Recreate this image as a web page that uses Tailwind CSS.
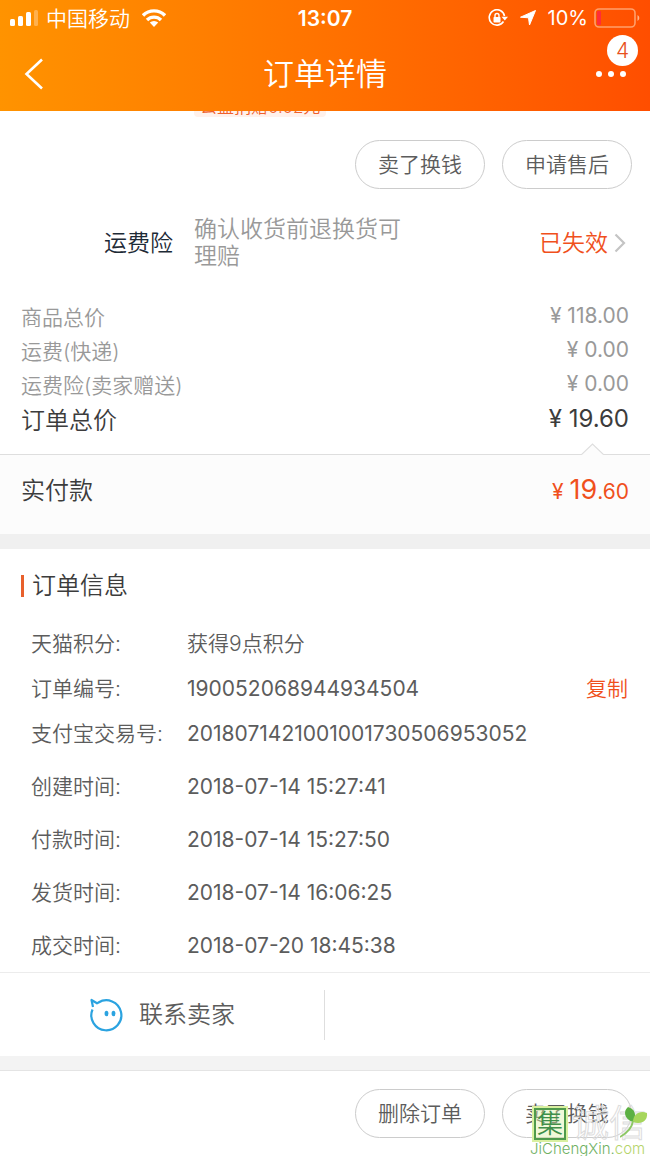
<!DOCTYPE html>
<html lang="zh-CN">
<head>
    <meta charset="UTF-8">
    <meta name="viewport" content="width=device-width, initial-scale=1.0">
    <title>订单详情</title>
    <script src="https://cdn.jsdelivr.net/npm/@tailwindcss/browser@4"></script>
</head>
<body class="bg-white min-h-screen font-['Inter','Noto_Sans_CJK_SC',sans-serif] font-[350] text-[#5c5c5c] text-[21px] leading-[34px]">

    <!-- Header -->
    <header class="relative z-10 bg-linear-to-r from-[#ff9300] via-[#ff7200] to-[#ff4e00] text-white">
        <div class="grid grid-cols-3 items-center h-9 pl-2.5 pr-2.5 text-[20px] leading-none">
            <div class="flex items-center gap-2">
                <svg class="w-7 h-4 shrink-0" viewBox="0 0 28 16" fill="currentColor">
                    <rect x="0" y="9" width="5" height="7" rx="1.5"/>
                    <rect x="8" y="6" width="5" height="10" rx="1.5"/>
                    <rect x="16" y="2" width="5" height="14" rx="1.5"/>
                    <rect x="24" y="0" width="4" height="16" rx="1.5" opacity="0.3"/>
                </svg>
                <span class="whitespace-nowrap text-[21px]">中国移动</span>
                <svg class="w-6 h-[18px] shrink-0 ml-1" viewBox="0 0 24 18" fill="none" stroke="currentColor" stroke-width="3.4">
                    <path d="M1 6.5a15.5 15.5 0 0 1 22 0"/>
                    <path d="M5 11a10 10 0 0 1 14 0"/>
                    <path d="M12 18l-4.2-4.4a6 6 0 0 1 8.4 0z" fill="currentColor" stroke="none"/>
                </svg>
            </div>
            <span class="text-center text-[21px] font-semibold">13:07</span>
            <div class="flex items-center justify-end gap-1.5">
                <svg class="w-5 h-[18px] shrink-0" viewBox="0 0 20 18" fill="none" stroke="currentColor" stroke-width="1.6">
                    <path d="M15.5 12.5A7.7 7.7 0 1 1 16.5 7"/>
                    <path d="M13.5 7.8H20l-3.2 3.8z" fill="currentColor" stroke="none"/>
                    <rect x="5.5" y="8" width="7" height="5.5" rx="0.8" fill="currentColor" stroke="none"/>
                    <path d="M7 8.5V6.5a2 2 0 0 1 4 0v2" stroke-width="1.4"/>
                </svg>
                <svg class="w-4 h-4 shrink-0 mx-1.5" viewBox="0 0 16 16" fill="currentColor" stroke="currentColor" stroke-linejoin="round">
                    <path d="M15.5 0.5L9.5 15L8.5 7.8L0.5 7.2z"/>
                </svg>
                <span class="font-normal">10%</span>
                <svg class="w-[46px] h-5 shrink-0" viewBox="0 0 46 20" fill="none">
                    <rect x="1" y="1" width="40" height="18" rx="4" stroke="#ffa06b" stroke-width="1.6"/>
                    <rect x="3" y="3" width="4" height="14" rx="1" fill="#ff2d38"/>
                    <path d="M43.5 7v6a3.4 3.4 0 0 0 0-6z" fill="#ffb68c"/>
                </svg>
            </div>
        </div>
        <div class="flex items-center justify-between h-[75px] px-6">
            <button type="button" aria-label="返回" class="w-9">
                <svg class="w-5 h-8" viewBox="0 0 20 32" fill="none" stroke="currentColor" stroke-width="2.6">
                    <path d="M18 1.5L2.5 16l15.5 14.5"/>
                </svg>
            </button>
            <h1 class="text-[31px]">订单详情</h1>
            <button type="button" aria-label="更多" class="relative w-9 flex justify-end">
                <svg class="w-[30px] h-1.5" viewBox="0 0 30 6" fill="currentColor">
                    <circle cx="3" cy="3" r="3"/>
                    <circle cx="15" cy="3" r="3"/>
                    <circle cx="27" cy="3" r="3"/>
                </svg>
                <span class="absolute -right-3 -top-9 size-[31px] rounded-full bg-white text-[#e8501c] leading-[31px] text-center">4</span>
            </button>
        </div>
    </header>

    <main>
        <!-- Tag of the item row, scrolled under the header -->
        <div class="h-[29px] pl-[194px]">
            <span class="relative -top-[22px] inline-block h-5 px-1.5 rounded-sm bg-[#fff1eb] text-[#f0602c] text-[17px] leading-5">公益捐赠0.02元</span>
        </div>

        <div class="flex justify-end gap-[17px] pr-[18px]">
            <button type="button" class="w-[130px] h-[49px] rounded-full border border-[#ccc]">卖了换钱</button>
            <button type="button" class="w-[130px] h-[49px] rounded-full border border-[#ccc]">申请售后</button>
        </div>

        <a href="#" class="flex items-center mt-[27px] pl-[104px] pr-6 text-[23px] leading-[27px]">
            <span class="w-[90px] shrink-0 text-[#1d2a36]">运费险</span>
            <span class="w-[212px] text-[#999]">确认收货前退换货可理赔</span>
            <span class="ml-auto text-[#f0501c]">已失效</span>
            <svg class="w-3 h-5 ml-1.5" viewBox="0 0 12 20" fill="none" stroke="#c4c4c4" stroke-width="2.2">
                <path d="M1.5 1.5L10 10l-8.5 8.5"/>
            </svg>
        </a>

        <!-- Price summary -->
        <dl class="mt-[29px] px-[21px] text-[#999]">
            <div class="flex justify-between h-[34px]"><dt class="pt-0.5">商品总价</dt><dd class="font-normal">¥ 118.00</dd></div>
            <div class="flex justify-between h-[34px]"><dt class="pt-0.5">运费(快递)</dt><dd class="font-normal">¥ 0.00</dd></div>
            <div class="flex justify-between h-[34px]"><dt class="pt-0.5">运费险(卖家赠送)</dt><dd class="font-normal">¥ 0.00</dd></div>
            <div class="flex justify-between h-[53px] text-[24px] leading-9 text-[#3c3c3c]"><dt class="pt-0.5">订单总价</dt><dd class="font-normal">¥ 19.60</dd></div>
        </dl>

        <div class="relative flex items-center justify-between h-20 pb-2 px-[21px] border-t border-[#dedede] bg-[#fcfcfc]">
            <svg class="absolute right-[46px] -top-3 w-[23px] h-3" viewBox="0 0 23 12" fill="#fcfcfc" stroke="#dedede" stroke-width="1.2">
                <path d="M0 12L11.5 1L23 12"/>
            </svg>
            <span class="text-[24px] text-[#3c3c3c]">实付款</span>
            <span class="font-normal text-[#f0501c]">¥ <span class="text-[27px]">19</span>.60</span>
        </div>

        <div class="h-[15px] bg-[#f0f0f0]"></div>

        <!-- Order information -->
        <section class="pl-[21px] pr-[22px] pt-5">
            <h2 class="flex items-center gap-2 text-[24px] text-[#3c3c3c]">
                <span class="w-[3px] h-[22px] bg-[#e8602c]"></span>订单信息
            </h2>
            <dl class="mt-[18px] pl-2.5">
                <div class="flex h-[45px] items-center"><dt class="w-[156px] shrink-0">天猫积分:</dt><dd>获得9点积分</dd></div>
                <div class="flex h-[45px] items-center">
                    <dt class="w-[156px] shrink-0">订单编号:</dt>
                    <dd class="flex grow justify-between font-normal">190052068944934504<button type="button" class="font-[350] text-[#f0501c]">复制</button></dd>
                </div>
                <div class="flex h-[45px] items-center"><dt class="w-[156px] shrink-0">支付宝交易号:</dt><dd class="font-normal">2018071421001001730506953052</dd></div>
                <div class="flex h-[53px] items-center mt-1"><dt class="w-[156px] shrink-0">创建时间:</dt><dd class="font-normal">2018-07-14 15:27:41</dd></div>
                <div class="flex h-[53px] items-center"><dt class="w-[156px] shrink-0">付款时间:</dt><dd class="font-normal">2018-07-14 15:27:50</dd></div>
                <div class="flex h-[53px] items-center"><dt class="w-[156px] shrink-0">发货时间:</dt><dd class="font-normal">2018-07-14 16:06:25</dd></div>
                <div class="flex h-[53px] items-center"><dt class="w-[156px] shrink-0">成交时间:</dt><dd class="font-normal">2018-07-20 18:45:38</dd></div>
            </dl>
        </section>

        <!-- Contact -->
        <div class="flex items-center h-[84px] border-t border-[#ececec]">
            <button type="button" class="flex items-center justify-center gap-4 w-1/2 h-[50px] border-r border-[#dedede] text-[24px]">
                <svg class="w-[34px] h-[34px]" viewBox="0 0 34 34" fill="none" stroke="#2ba3e0" stroke-width="2.2" stroke-linejoin="round">
                    <path d="M3.5 11.5A15 15 0 1 0 9.5 4.5L8 5.3L2.5 2L4 9"/>
                    <ellipse cx="17.5" cy="15.5" rx="1.9" ry="2.8" fill="#2ba3e0" stroke="none"/>
                    <ellipse cx="24.5" cy="15.5" rx="1.9" ry="2.8" fill="#2ba3e0" stroke="none"/>
                </svg>
                联系卖家
            </button>
        </div>
        <div class="h-[14px] bg-[#f3f3f3]"></div>
    </main>

    <!-- Bottom bar -->
    <footer class="relative flex justify-end gap-[17px] h-[86px] pt-[18px] pr-[18px] border-t border-[#e4e4e4]">
        <button type="button" class="w-[130px] h-[49px] rounded-full border border-[#ccc]">删除订单</button>
        <button type="button" class="w-[130px] h-[49px] rounded-full border border-[#ccc]">卖了换钱</button>

        <!-- Site watermark -->
        <div class="absolute right-0 bottom-0 w-[120px] pointer-events-none">
            <div class="relative flex items-center gap-1.5 pl-1">
                <span class="size-8 border-2 border-[#4f9a4c] outline-2 outline-[#d9f0a0] bg-[#d9f0a0]/40 text-[26px] leading-7 text-center text-[#3f8f4a]">集</span>
                <span class="text-[37px] leading-9 text-transparent whitespace-nowrap [-webkit-text-stroke:1px_#dcdcdc]">诚信</span>
                <svg class="absolute right-0.5 top-0 w-7 h-8" viewBox="0 0 28 32">
                    <path d="M13 16C4 13 3 5 8 1c7 2 9 8 5 15z" fill="#5cb043"/>
                    <path d="M13 16C13 8 20 4 27 7c1 8-6 12-14 9z" fill="#a6d65c"/>
                    <path d="M13 15C12 22 7 27 0 31" fill="none" stroke="#8cc763" stroke-width="1.8"/>
                </svg>
            </div>
            <p class="text-[15px] leading-[14px] text-[#6fb163]">JiChengXin.<span class="text-[#b5d46a]">com</span></p>
        </div>
    </footer>
</body>
</html>
